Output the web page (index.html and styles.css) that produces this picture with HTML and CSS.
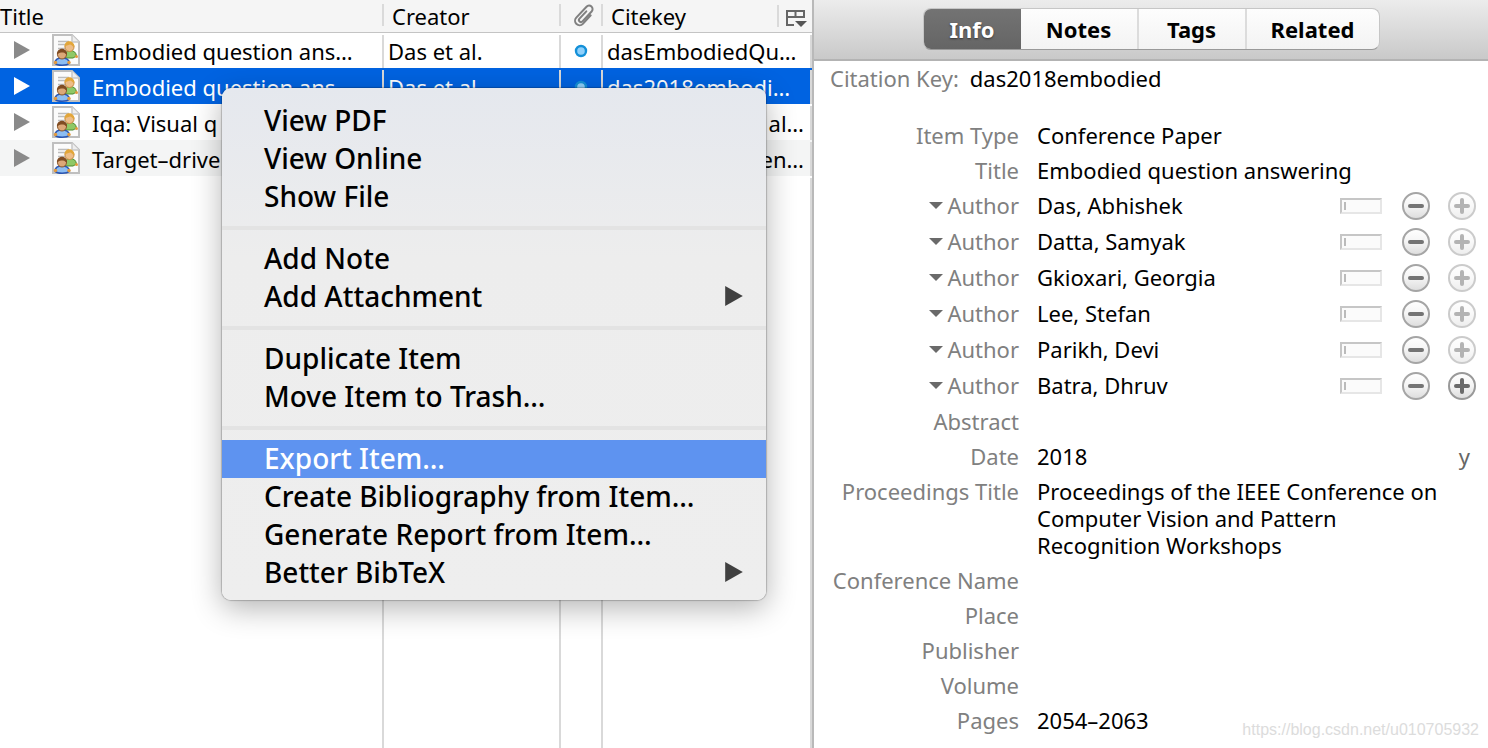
FILE: index.html
```html
<!DOCTYPE html>
<html lang="en">
<head>
<meta charset="utf-8">
<title>Library</title>
<link rel="stylesheet" href="styles.css">
</head>
<body>
<svg class="defs" aria-hidden="true">
  <symbol id="paper" viewBox="0 0 28 32">
    <path d="M1 1H20L27 8V31H1Z" fill="#fbfbfb" stroke="#bfbfbf" stroke-width="2"/>
    <path d="M20 1V8H27" fill="#eee" stroke="#c8c8c8" stroke-width="1.5"/>
    <path d="M6 7.500H17M6 10.500H17M6 14.500H14M6 18.500H12" stroke="#bdbdbd" stroke-width="1.500"/>
    <path d="M13 23C13 18 15 16.500 18 16.500C22 16.500 24 18.500 24.500 22L21 24H14Z" fill="#8fc866" stroke="#4c8c2e"/>
    <circle cx="24.500" cy="22.500" r="1.500" fill="#e49a3c"/>
    <circle cx="17.500" cy="13" r="4.500" fill="#edbd88" stroke="#c98c40"/>
    <path d="M12.500 13C12 5 22.500 5.500 22.500 13C20 12.500 19.500 10.500 18 10.500C16 11 14 11.500 12.500 13Z" fill="#e2a63a"/>
    <path d="M3 29C3 25 6 24 10 24C14 24 17 25 17.500 29C15 32 5 32 3 29Z" fill="#8dbdf2" stroke="#2a55b2" stroke-width="1.500"/>
    <circle cx="3.500" cy="28.500" r="1.700" fill="#e49a3c"/><circle cx="17" cy="28.500" r="1.700" fill="#e49a3c"/>
    <circle cx="10" cy="20.500" r="4.500" fill="#dca878" stroke="#8a5528"/>
    <path d="M5 21C4 12.500 16 12.500 15 21C13.500 20 13 18.500 11 18.500C8 18.500 6 19 5 21Z" fill="#804c22"/>
  </symbol>
  <symbol id="dot" viewBox="0 0 14 14">
    <circle cx="7" cy="7" r="5" fill="#8fd0fb" stroke="#1490d8" stroke-width="2.400"/>
  </symbol>
  <symbol id="tri" viewBox="0 0 18 20"><path d="M1 1L17 10L1 19Z" fill="currentColor"/></symbol>
  <symbol id="minus" viewBox="0 0 28 28">
    <circle cx="14" cy="14" r="13" fill="url(#knob)" stroke="#a5a5a5" stroke-width="2"/>
    <path d="M8 14H20" stroke="#747474" stroke-width="4" stroke-linecap="round"/>
  </symbol>
  <symbol id="plus" viewBox="0 0 28 28">
    <circle cx="14" cy="14" r="13" fill="url(#knob)" stroke="#999" stroke-width="2"/>
    <path d="M8 14H20M14 8V20" stroke="#6a6a6a" stroke-width="4" stroke-linecap="round"/>
  </symbol>
  <linearGradient id="knob" x1="0" y1="0" x2="0" y2="1"><stop offset="0" stop-color="#fff"/><stop offset="0.500" stop-color="#f4f4f4"/><stop offset="1" stop-color="#dcdcdc"/></linearGradient>
</svg>
<div class="window">
  <main class="library">
    <table class="items">
      <colgroup><col class="col-title"><col class="col-creator"><col class="col-clip"><col></colgroup>
      <thead>
        <tr>
          <th>Title</th>
          <th>Creator</th>
          <th class="clip"><svg class="clip-icon" viewBox="0 0 24 24" role="img" aria-label="Attachments"><path transform="rotate(43 12 12)" d="M16.500 7V18.500a4.500 4.500 0 0 1-9 0V3.500a3.500 3.500 0 0 1 7 0V17a2 2 0 0 1-4 0V7" fill="none" stroke="#808080" stroke-width="2" stroke-linecap="round" stroke-linejoin="round"/></svg></th>
          <th class="last"><div class="last-head"><span>Citekey</span><button class="picker" aria-label="Choose columns"><svg viewBox="0 0 22 20"><path d="M9 17H2V3H19V10M2 9H19M10.500 3V9" fill="none" stroke="#666" stroke-width="2"/><path d="M10 13H22L16 19Z" fill="#555"/></svg></button></div></th>
        </tr>
      </thead>
      <tbody>
        <tr>
          <td><div class="name"><svg class="twisty"><use href="#tri"/></svg><svg class="paper"><use href="#paper"/></svg><span>Embodied question ans…</span></div></td>
          <td>Das et al.</td><td class="clip"><svg class="dot"><use href="#dot"/></svg></td><td>dasEmbodiedQu…</td>
        </tr>
        <tr class="selected">
          <td><div class="name"><svg class="twisty"><use href="#tri"/></svg><svg class="paper"><use href="#paper"/></svg><span>Embodied question ans…</span></div></td>
          <td>Das et al.</td><td class="clip"><svg class="dot"><use href="#dot"/></svg></td><td>das2018embodi…</td>
        </tr>
        <tr>
          <td><div class="name"><svg class="twisty"><use href="#tri"/></svg><svg class="paper"><use href="#paper"/></svg><span>Iqa: Visual q</span></div></td>
          <td></td><td></td><td class="tail">al…</td>
        </tr>
        <tr class="striped">
          <td><div class="name"><svg class="twisty"><use href="#tri"/></svg><svg class="paper"><use href="#paper"/></svg><span>Target–drive</span></div></td>
          <td></td><td></td><td class="tail">en…</td>
        </tr>
        <tr class="filler"><td></td><td></td><td></td><td></td></tr>
      </tbody>
    </table>
    <div class="menu" role="menu">
      <button role="menuitem">View PDF</button>
      <button role="menuitem">View Online</button>
      <button role="menuitem">Show File</button>
      <hr>
      <button role="menuitem">Add Note</button>
      <button role="menuitem">Add Attachment<svg class="arrow"><use href="#tri"/></svg></button>
      <hr>
      <button role="menuitem">Duplicate Item</button>
      <button role="menuitem">Move Item to Trash…</button>
      <hr>
      <button role="menuitem" class="active">Export Item…</button>
      <button role="menuitem">Create Bibliography from Item…</button>
      <button role="menuitem">Generate Report from Item…</button>
      <button role="menuitem">Better BibTeX<svg class="arrow"><use href="#tri"/></svg></button>
    </div>
  </main>
  <aside class="details">
    <nav class="toolbar">
      <div class="tabs">
        <button class="tab on">Info</button><button class="tab notes">Notes</button><button class="tab tags">Tags</button><button class="tab related">Related</button>
      </div>
    </nav>
    <p class="citation"><span class="label">Citation Key:</span><span>das2018embodied</span></p>
    <dl class="fields">
      <div class="field"><dt>Item Type</dt><dd>Conference Paper</dd></div>
      <div class="field"><dt>Title</dt><dd>Embodied question answering</dd></div>
      <div class="field author"><dt>Author</dt><dd>Das, Abhishek</dd><button class="mode" aria-label="Single field"></button><button class="knob" aria-label="Remove"><svg><use href="#minus"/></svg></button><button class="knob" disabled aria-label="Add"><svg><use href="#plus"/></svg></button></div>
      <div class="field author"><dt>Author</dt><dd>Datta, Samyak</dd><button class="mode" aria-label="Single field"></button><button class="knob" aria-label="Remove"><svg><use href="#minus"/></svg></button><button class="knob" disabled aria-label="Add"><svg><use href="#plus"/></svg></button></div>
      <div class="field author"><dt>Author</dt><dd>Gkioxari, Georgia</dd><button class="mode" aria-label="Single field"></button><button class="knob" aria-label="Remove"><svg><use href="#minus"/></svg></button><button class="knob" disabled aria-label="Add"><svg><use href="#plus"/></svg></button></div>
      <div class="field author"><dt>Author</dt><dd>Lee, Stefan</dd><button class="mode" aria-label="Single field"></button><button class="knob" aria-label="Remove"><svg><use href="#minus"/></svg></button><button class="knob" disabled aria-label="Add"><svg><use href="#plus"/></svg></button></div>
      <div class="field author"><dt>Author</dt><dd>Parikh, Devi</dd><button class="mode" aria-label="Single field"></button><button class="knob" aria-label="Remove"><svg><use href="#minus"/></svg></button><button class="knob" disabled aria-label="Add"><svg><use href="#plus"/></svg></button></div>
      <div class="field author"><dt>Author</dt><dd>Batra, Dhruv</dd><button class="mode" aria-label="Single field"></button><button class="knob" aria-label="Remove"><svg><use href="#minus"/></svg></button><button class="knob" aria-label="Add"><svg><use href="#plus"/></svg></button></div>
      <div class="field"><dt>Abstract</dt><dd></dd></div>
      <div class="field"><dt>Date</dt><dd>2018</dd><span class="precision">y</span></div>
      <div class="field"><dt>Proceedings Title</dt><dd>Proceedings of the IEEE Conference on<br>Computer Vision and Pattern<br>Recognition Workshops</dd></div>
      <div class="field"><dt>Conference Name</dt><dd></dd></div>
      <div class="field"><dt>Place</dt><dd></dd></div>
      <div class="field"><dt>Publisher</dt><dd></dd></div>
      <div class="field"><dt>Volume</dt><dd></dd></div>
      <div class="field"><dt>Pages</dt><dd>2054–2063</dd></div>
      <div class="field"><dt>Series</dt><dd></dd></div>
    </dl>
    <span class="watermark">https://blog.csdn.net/u010705932</span>
  </aside>
</div>
</body>
</html>
```

FILE: styles.css
```css
* { box-sizing: border-box; }
body {
  margin: 0;
  font: 22px/28px "Noto Sans", "Open Sans", sans-serif;
  color: #000;
  background: #fff;
}
button {
  margin: 0;
  padding: 0;
  border: 0;
  background: none;
  font: inherit;
  color: inherit;
}
svg { display: block; flex: none; }
.defs { position: absolute; width: 0; height: 0; }
.window {
  display: grid;
  grid-template-columns: 814fr 674fr;
  height: 100vh;
  overflow: hidden;
}

/* item list */
.library {
  position: relative;
  border-right: 2px solid #b9b9b9;
  min-height: 0;
}
.items {
  width: 100%;
  height: 100vh;
  table-layout: fixed;
  border-collapse: collapse;
}
.col-title { width: 384px; }
.col-creator { width: 177px; }
.col-clip { width: 42px; }
.items th {
  height: 32px;
  padding: 0 0 0 8px;
  border-bottom: 1px solid #c4c4c4;
  background: linear-gradient(#dadada, #dadada) right 4px / 2px 22px no-repeat #f5f5f5;
  text-align: left;
  font-weight: 400;
}
.items th:first-child { padding-left: 0; }
.items th.last { background: #f5f5f5; }
.items td {
  height: 36px;
  padding: 2px 0 0 4px;
  background: linear-gradient(#d9d9d9, #d9d9d9) right 2px / 2px 100% no-repeat;
  white-space: nowrap;
}
.items th.clip { padding: 0 0 0 11px; }
.items td.clip { padding: 1px 0 0 13px; }
.items .filler td { height: auto; }
.striped { background: #f4f5f5; }
.selected { background: #0063e1; color: #fff; }
.items .tail { text-align: right; padding-right: 8px; }
.clip-icon { width: 24px; height: 24px; }
.last-head { display: flex; justify-content: space-between; }
.picker {
  height: 22px;
  margin-top: 3px;
  padding: 3px 5px 0 6px;
  border-left: 2px solid #dadada;
}
.picker svg { width: 22px; height: 20px; }
.name { display: flex; align-items: center; height: 32px; }
.twisty { width: 18px; height: 20px; margin: -2px 20px 0 9px; color: #8a8a8a; }
.selected .twisty { color: #fff; }
.paper { width: 28px; height: 32px; margin: -2px 12px 0 1px; }
.dot { width: 14px; height: 14px; }

/* context menu */
.menu {
  position: absolute;
  left: 222px;
  top: 88px;
  width: 544px;
  padding: 14px 0 8px;
  border-radius: 9px;
  background: linear-gradient(#e5e8ee, #ededed 170px, #eee);
  box-shadow: 0 0 1px 1px rgba(0, 0, 0, .2), 0 8px 30px rgba(0, 0, 0, .3);
  font-size: 28px;
  font-weight: 500;
}
.menu button {
  display: flex;
  justify-content: space-between;
  align-items: center;
  width: 100%;
  height: 38px;
  padding: 0 22px 3px 42px;
  text-align: left;
}
.menu .active { background: #5e93f0; color: #fff; }
.menu hr { height: 4px; margin: 10px 0; border: 0; background: #e3e3e3; }
.arrow { width: 20px; height: 22px; color: #404040; }

/* item details */
.details { position: relative; min-width: 0; overflow: hidden; }
.toolbar {
  display: flex;
  justify-content: center;
  height: 61px;
  padding: 8px 0 0;
  border-bottom: 2px solid #b3b3b3;
  background: linear-gradient(#ececec, #c9c9c9);
}
.tabs {
  display: flex;
  height: 42px;
  border: 1px solid #c6c6c6;
  border-bottom-color: #999;
  border-radius: 8px;
  overflow: hidden;
  background: linear-gradient(#fdfdfd, #f3f3f3);
}
.tab { width: 116px; font-weight: 700; border-left: 2px solid #dcdcdc; }
.tab.on {
  width: 97px;
  border: 0;
  background: linear-gradient(#737373, #656565);
  color: #fff;
  text-shadow: 0 1px 2px #333;
}
.tab.notes { border: 0; }
.tab.tags { width: 108px; }
.tab.related { width: 134px; }
.citation { display: flex; gap: 11px; margin: 3px 0 29px 16px; }
.label, dt { color: #808080; }
.fields { margin: 0; }
.field {
  display: grid;
  grid-template-columns: 205px 1fr;
  column-gap: 18px;
  min-height: 35px;
  padding: 1px 12px 0 0;
  line-height: 27px;
}
.field:has(br) { padding-bottom: 7px; }
.field:has(.precision) { grid-template-columns: 205px 1fr auto; }
.precision { color: #666; padding-right: 6px; }
dt { text-align: right; }
dd { margin: 0; min-width: 0; white-space: nowrap; }
.author { grid-template-columns: 205px 1fr 44px 28px 28px; height: 36px; align-items: start; }
.author dt { display: flex; align-items: center; justify-content: flex-end; gap: 4px; }
.author dt::before {
  content: "";
  border: 7px solid transparent;
  border-top-color: #6a6a6a;
  border-bottom: 0;
}
.mode {
  width: 42px;
  height: 16px;
  margin-top: 6px;
  border: 2px solid;
  border-color: #c6c6c6 #e6e6e6 #e6e6e6 #c6c6c6;
  background: linear-gradient(#bbb, #bbb) 2px 2px / 2px 8px no-repeat #fbfbfb;
}
.knob svg { width: 28px; height: 28px; }
.knob:disabled { opacity: .5; }
.watermark {
  position: absolute;
  right: 9px;
  bottom: 4px;
  font: 16px/28px "Liberation Sans", Arial, sans-serif;
  color: #dcdcdc;
}
```
